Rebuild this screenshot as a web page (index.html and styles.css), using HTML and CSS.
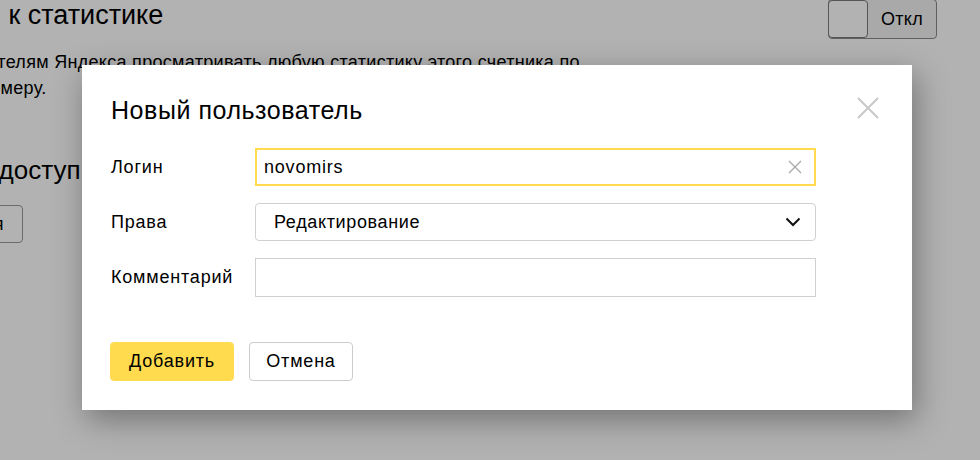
FILE: index.html
```html
<!DOCTYPE html>
<html lang="ru">
<head>
<meta charset="utf-8">
<link rel="stylesheet" href="styles.css">
</head>
<body>
<div class="page">
  <section class="block">
    <div class="block-head">
      <h2 class="block-title block-title-first">Доступ к статистике</h2>
      <div class="toggle"><span class="toggle-knob"></span><span class="toggle-label">Откл</span></div>
    </div>
    <p class="block-text">Разрешить пользователям Яндекса просматривать любую статистику этого счетника по<br>номеру.</p>
  </section>
  <section class="block block-second">
    <h2 class="block-title block-title-second">Гостевой доступ</h2>
    <button class="page-btn">Добавить пользователя</button>
  </section>
</div>
<div class="overlay"></div>
<div class="modal">
  <div class="modal-head">
    <h1 class="modal-title">Новый пользователь</h1>
    <svg class="modal-close" width="22" height="22" viewBox="0 0 22 22"><path d="M1 1L21 21M21 1L1 21" stroke="#c8c8c8" stroke-width="2" fill="none"/></svg>
  </div>
  <div class="form">
    <div class="row">
      <label class="label">Логин</label>
      <div class="field field-focus">
        <span class="field-value">novomirs</span>
        <svg class="clear" width="14" height="14" viewBox="0 0 14 14"><path d="M1 1L13 13M13 1L1 13" stroke="#a8a8a8" stroke-width="1.3" fill="none"/></svg>
      </div>
    </div>
    <div class="row">
      <label class="label">Права</label>
      <div class="field field-select">
        <span class="select-value">Редактирование</span>
        <svg class="arrow" width="16" height="10" viewBox="0 0 16 10"><path d="M1.5 1.5L8 8L14.5 1.5" stroke="#111" stroke-width="2" fill="none"/></svg>
      </div>
    </div>
    <div class="row">
      <label class="label">Комментарий</label>
      <div class="field field-plain"></div>
    </div>
  </div>
  <div class="actions">
    <button class="btn btn-primary">Добавить</button>
    <button class="btn btn-default">Отмена</button>
  </div>
</div>
</body>
</html>
```
FILE: styles.css
```css
* { box-sizing: border-box; }
html, body {
  margin: 0;
  padding: 0;
  width: 980px;
  height: 460px;
  overflow: hidden;
  background: #fff;
  font-family: "Liberation Sans", Arial, sans-serif;
  color: #000;
}
.page {
  width: 980px;
  white-space: nowrap;
}
.block-head {
  display: flex;
  justify-content: space-between;
  align-items: flex-start;
  height: 39px;
}
.block-title {
  margin: 0;
  font-weight: normal;
  line-height: 30px;
}
.block-title-first {
  font-size: 27px;
  margin-left: -87px;
}
.block-title-second {
  font-size: 26px;
  margin-left: -117px;
}
.toggle {
  display: flex;
  height: 40px;
  width: 109px;
  margin-top: -1px;
  margin-right: 43px;
  border: 1px solid #8a8a8a;
  border-radius: 4px;
  background: #f3f3f3;
}
.toggle-knob {
  width: 40px;
  height: 38px;
  margin: 0 0 0 -1px;
  border: 1px solid #7a7a7a;
  border-radius: 4px;
  background: #fff;
}
.toggle-label {
  flex: 1;
  text-align: center;
  font-size: 18px;
  letter-spacing: 0.3px;
  line-height: 38px;
}
.block-text {
  margin: 10px 0 0 -20px;
  text-indent: -161px;
  font-size: 18px;
  letter-spacing: 0.3px;
  line-height: 26px;
}
.block-second {
  margin-top: 54px;
}
.page-btn {
  display: block;
  margin: 20px 0 0 -214px;
  height: 38px;
  padding: 0 18px;
  border: 1px solid #9a9a9a;
  border-radius: 4px;
  background: #fff;
  font-family: "Liberation Sans", sans-serif;
  font-size: 18px;
  color: #000;
}
.overlay {
  position: absolute;
  inset: 0;
  background: rgba(0, 0, 0, 0.3);
}
.modal {
  position: absolute;
  left: 82px;
  top: 65px;
  width: 830px;
  height: 345px;
  background: #fff;
  padding: 30px 96px 0 29px;
  box-shadow: 4px 10px 30px rgba(0, 0, 0, 0.35);
}
.modal-head {
  display: flex;
  justify-content: space-between;
  align-items: center;
  height: 30px;
}
.modal-title {
  margin: 0;
  font-weight: normal;
  font-size: 25px;
  letter-spacing: 0.55px;
  line-height: 30px;
}
.modal-close {
  margin-right: -63px;
  margin-top: -4px;
}
.form {
  margin-top: 23px;
  display: flex;
  flex-direction: column;
  gap: 17px;
}
.row {
  display: flex;
  align-items: center;
}
.label {
  width: 144px;
  font-size: 18px;
  letter-spacing: 0.8px;
}
.field {
  flex: 1;
  height: 38px;
  display: flex;
  align-items: center;
  justify-content: space-between;
  font-size: 18px;
  letter-spacing: 0.8px;
}
.field-focus {
  border: 2px solid #ffdb4d;
  padding: 0 12px 0 7px;
}
.field-select {
  border: 1px solid #d0d0d0;
  border-radius: 4px;
  padding: 0 14px 0 18px;
  letter-spacing: 0.65px;
}
.field-plain {
  border: 1px solid #d0d0d0;
  height: 39px;
}
.actions {
  margin-top: 45px;
  display: flex;
  gap: 15px;
  margin-left: -1px;
}
.btn {
  height: 39px;
  border-radius: 4px;
  font-family: "Liberation Sans", sans-serif;
  font-size: 18px;
  letter-spacing: 0.8px;
  color: #000;
  padding: 0;
}
.btn-primary {
  background: #ffdb4d;
  border: 1px solid #ffdb4d;
  width: 124px;
}
.btn-default {
  background: #fff;
  border: 1px solid #ccc;
  width: 104px;
}
```
